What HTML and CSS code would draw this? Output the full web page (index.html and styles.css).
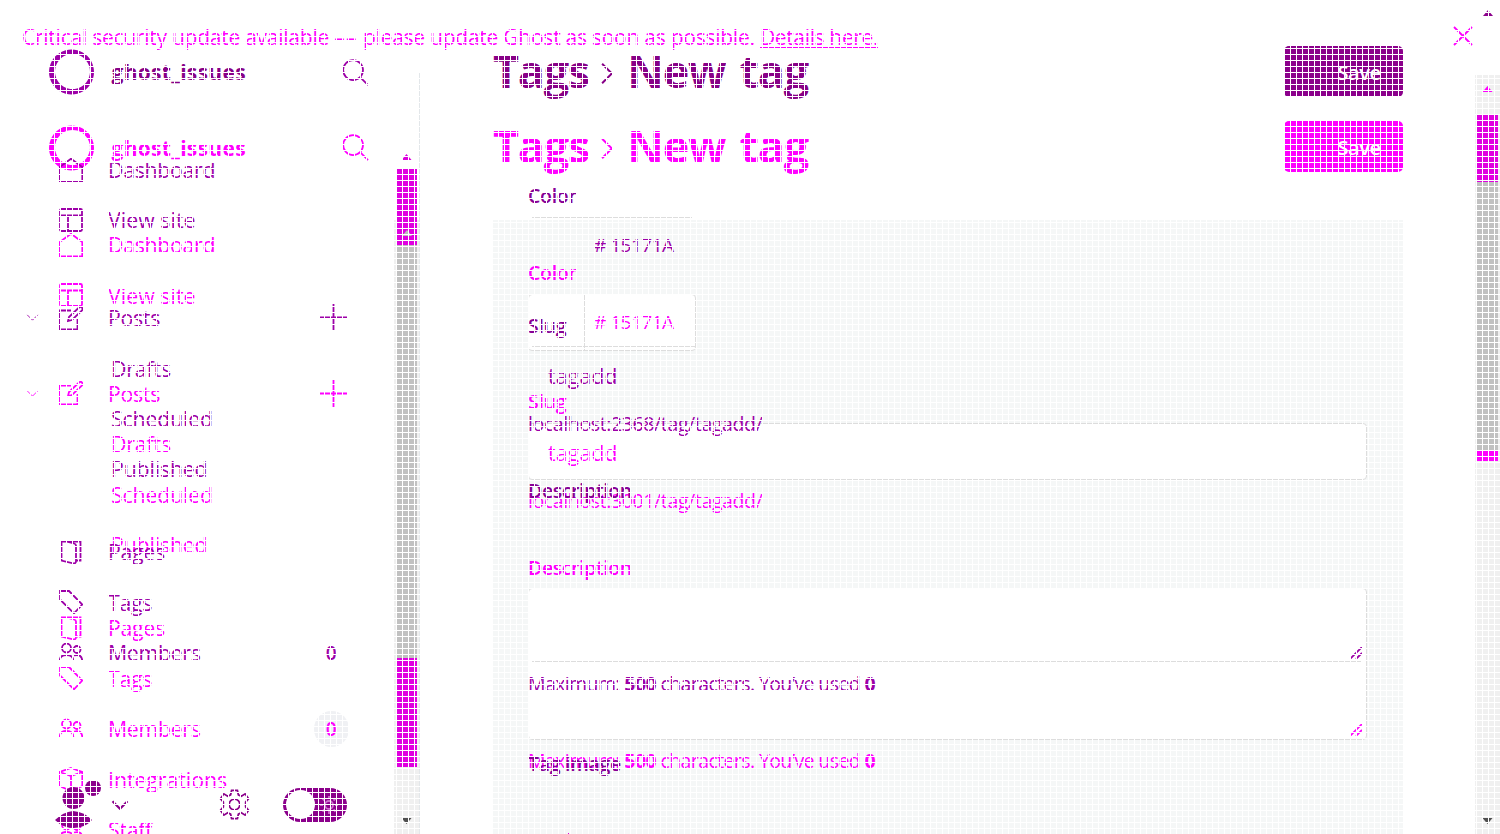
FILE: index.html
```html
<!DOCTYPE html>
<html lang="en">
<head>
<meta charset="utf-8">
<title>New tag</title>
<link rel="stylesheet" href="styles.css">
</head>
<body>
<svg class="defs" width="0" height="0">
  <symbol id="ring" viewBox="0 0 46 46"><path fill="currentColor" fill-rule="evenodd" d="M22.500 0.500a22.500 22.500 0 1 0 .01 0zM23.500 5a17.500 17.500 0 1 1-.01 0z"/></symbol>
  <symbol id="search" viewBox="0 0 28 28"><circle cx="11.500" cy="11.500" r="10.300"/><path d="M19 19l8 8"/></symbol>
  <symbol id="home" viewBox="0 0 24 24"><path d="M.7 9V23.300H23.300V9L12 .7z"/></symbol>
  <symbol id="site" viewBox="0 0 24 24"><rect x="1" y="1" width="22" height="22" rx="1.500"/><path d="M1 7.500H23M9 7.500V23"/></symbol>
  <symbol id="edit" viewBox="0 0 24 24"><path d="M12 4.500H.7V23.300H18.500V13"/><path d="M9 15l1-4L20 1.500q2-1.500 3 0t0 3L13 14z"/></symbol>
  <symbol id="page" viewBox="0 0 24 24"><path d="M17 20.500H21.500V1.500H2.500V20.500L14 23.300q3 .3 3-2V5.500q0-1.500-2-2L7 1.500"/></symbol>
  <symbol id="tag" viewBox="0 0 24 24"><path d="M1 1H10L23.300 14.500L15 23.300L1 9.500z"/></symbol>
  <symbol id="members" viewBox="0 0 24 24"><circle cx="7.500" cy="7" r="4.500"/><circle cx="18" cy="8.500" r="3.500"/><path d="M.7 20q0-6 6.800-6t6.800 6M15 14.500q8-2 8.300 5.500"/></symbol>
  <symbol id="box" viewBox="0 0 24 24"><path d="M12 1L23.300 5V19L12 24L.7 19V5zM.7 5L12 9L23.300 5M12 9V24"/></symbol>
  <symbol id="chev" viewBox="0 0 14 8"><path d="M1 1l6 6 6-6"/></symbol>
  <symbol id="plus" viewBox="0 0 27 27"><path d="M13.500 0V27M0 13.500H27"/></symbol>
  <symbol id="gear" viewBox="0 0 32 32"><circle cx="16" cy="16" r="5.500"/><path d="M13 1.500H19L20 6L23 7.500L27 5L30.500 10L27.500 13.500V18.500L30.500 22L27 27L23 24.500L20 26L19 30.500H13L12 26L9 24.500L5 27L1.500 22L4.500 18.500V13.500L1.500 10L5 5L9 7.500L12 6z"/></symbol>
  <symbol id="grip" viewBox="0 0 12 12"><path d="M0 12L12 0M6 12l6-6"/></symbol>
</svg>

<div class="stage">
  <div class="panel"></div>
  <div class="rule"></div>
  <div class="scroll side">
    <i class="up"></i><i class="thumb t1"></i><i class="thumb t2"></i><i class="thumb t3"></i><i class="down"></i>
  </div>
  <div class="scroll page">
    <i class="up"></i><i class="thumb t1"></i><i class="thumb t2"></i><i class="thumb t3"></i><i class="down"></i>
  </div>

  <div class="layer after">
    <aside>
      <header><svg class="ring"><use href="#ring"/></svg><b class="name">ghost_issues</b><svg class="search"><use href="#search"/></svg></header>
      <nav>
        <a><svg><use href="#home"/></svg><span>Dashboard</span></a>
        <a><svg><use href="#site"/></svg><span class="view">View site</span></a>
        <a class="posts"><svg class="chev"><use href="#chev"/></svg><svg><use href="#edit"/></svg><span>Posts</span><svg class="plus"><use href="#plus"/></svg></a>
        <a class="sub"><span>Drafts</span></a>
        <a class="sub"><span>Scheduled</span></a>
        <a class="sub"><span>Published</span></a>
        <a class="pages"><svg><use href="#page"/></svg><span>Pages</span></a>
        <a><svg><use href="#tag"/></svg><span>Tags</span></a>
        <a><svg><use href="#members"/></svg><span class="members">Members</span><em class="count">0</em></a>
        <a><svg><use href="#box"/></svg><span class="wide">Integrations</span></a>
        <a><svg><use href="#members"/></svg><span>Staff</span></a>
      </nav>
    </aside>
    <main>
      <div class="title"><h1><span>Tags</span><svg><use href="#chev"/></svg><span>New tag</span></h1><button>Save</button></div>
      <form>
        <label>Color</label>
        <div class="color"><i></i><span># 15171A</span></div>
        <label>Slug</label>
        <div class="input">tagadd</div>
        <p class="url">localhost:3001/tag/tagadd/</p>
        <label class="desc">Description</label>
        <div class="area"><svg><use href="#grip"/></svg></div>
        <p class="max">Maximum: <b>500</b> characters. You’ve used <b>0</b></p>
      </form>
    </main>
  </div>

  <div class="layer before">
    <aside>
      <header><svg class="ring"><use href="#ring"/></svg><b class="name">ghost_issues</b><svg class="search"><use href="#search"/></svg></header>
      <nav>
        <a><svg><use href="#home"/></svg><span>Dashboard</span></a>
        <a><svg><use href="#site"/></svg><span class="view">View site</span></a>
        <a class="posts"><svg class="chev"><use href="#chev"/></svg><svg><use href="#edit"/></svg><span>Posts</span><svg class="plus"><use href="#plus"/></svg></a>
        <a class="sub"><span>Drafts</span></a>
        <a class="sub"><span>Scheduled</span></a>
        <a class="sub"><span>Published</span></a>
        <a class="pages"><svg><use href="#page"/></svg><span>Pages</span></a>
        <a><svg><use href="#tag"/></svg><span>Tags</span></a>
        <a><svg><use href="#members"/></svg><span class="members">Members</span><em class="count">0</em></a>
      </nav>
    </aside>
    <main>
      <div class="title"><h1><span>Tags</span><svg><use href="#chev"/></svg><span>New tag</span></h1><button>Save</button></div>
      <form>
        <label>Color</label>
        <div class="color"><i></i><span># 15171A</span></div>
        <label>Slug</label>
        <div class="input">tagadd</div>
        <p class="url">localhost:2368/tag/tagadd/</p>
        <label class="desc">Description</label>
        <div class="area"><svg><use href="#grip"/></svg></div>
        <p class="max">Maximum: <b>500</b> characters. You’ve used <b>0</b></p>
        <label class="image">Tag image</label>
      </form>
    </main>
  </div>

  <div class="userbar">
    <svg class="user" viewBox="0 0 48 50"><circle cx="18.500" cy="18" r="11"/><circle cx="38" cy="8" r="8"/><path d="M0 40Q8 32 18 31Q30 32 37 40Q30 48 18 48Q8 48 0 40z"/></svg>
    <svg class="uchev"><use href="#chev"/></svg>
    <svg class="gear"><use href="#gear"/></svg>
    <div class="toggle"><i></i><svg viewBox="0 0 18 18"><circle cx="9" cy="9" r="4"/><path d="M9 0v3M9 15v3M0 9h3M15 9h3M2.500 2.500l2 2M13.500 13.500l2 2M15.500 2.500l-2 2M4.500 13.500l-2 2"/></svg></div>
  </div>

  <div class="banner"><p>Critical security update available <span class="dash">––</span> please update Ghost as soon as possible. <span class="link">Details here.</span></p><svg viewBox="0 0 18 18"><path d="M0 0L18 18M18 0L0 18"/></svg></div>
  <i class="arrow top"></i>
  <i class="arrow ghost"></i>
  <i class="dot"></i>
  <div class="mesh"></div>
</div>
</body>
</html>
```
FILE: styles.css
```css
* { box-sizing: border-box; }
body { margin: 0; background: #fff; font-family: "Open Sans", "Noto Sans", sans-serif; font-size: 21px; }
h1, p { margin: 0; }
i, em { display: block; font-style: normal; }
svg { fill: none; stroke: currentColor; stroke-width: 1.800px; flex: none; overflow: visible; }
.defs { position: absolute; }
.stage { position: relative; width: 1500px; height: 834px; overflow: hidden; }
.stage > * { position: absolute; }

.panel { left: 493px; top: 220px; width: 910px; height: 614px; background: #f5f7f7; }
.rule { left: 419px; top: 73px; width: 1px; height: 761px; background: #e3e7ea; }

/* scrollbars */
.scroll { display: flex; flex-direction: column; align-items: center; }
.scroll.side { left: 394px; top: 154px; width: 25px; height: 680px; background: linear-gradient(#fff 66px, #f0f0f0 66px); }
.scroll.page { left: 1475px; top: 75px; width: 25px; height: 759px; background: #f0f0f0; }
.up, .down, .arrow { width: 10px; height: 6px; background: #d0d; clip-path: polygon(50% 0, 100% 100%, 0 100%); }
.down { background: #505050; clip-path: polygon(0 0, 100% 0, 50% 100%); margin: auto 0 10px; }
.thumb { width: 20px; background: #e000e0; }
.t2 { background: #c1c1c1; }
.side .t1 { height: 76px; margin-top: 9px; }
.side .t2 { height: 413px; }
.side .t3 { height: 109px; }
.page .thumb { width: 21px; }
.page .up { margin-top: 11px; background: #f0f; }
.page .t1 { height: 67px; margin-top: 23px; }
.page .t2 { height: 269px; }
.page .t3 { height: 10px; background: #f0f; }
.arrow.top { left: 1483px; top: 10px; background: #8b008b; }
.arrow.ghost { left: 402px; top: 230px; background: #bbb; }
.dot { left: 568px; top: 833px; width: 1px; height: 1px; background: #e000e0; }

/* interface layers */
.layer { left: 0; top: 0; width: 1500px; display: grid; grid-template-columns: 493px 910px; color: #f0f; }
.before { top: -75.500px; color: #9d00a8; }
aside header { display: flex; align-items: center; width: 369px; height: 56px; margin-top: 119.500px; padding-left: 48.500px; }
.ring { width: 46px; height: 46px; stroke: none; }
.name { margin-left: 17px; font-size: 21px; letter-spacing: .3px; }
.before .name { color: #870087; }
.search { width: 27px; height: 27px; margin-left: auto; }
nav { margin-top: 44px; }
nav a { display: flex; align-items: center; height: 50.500px; padding-left: 59px; letter-spacing: -.3px; font-size: 21.300px; }
.before nav { margin-top: 44.500px; }
.before nav a { height: 50.300px; }
nav a > svg { width: 24px; height: 24px; margin-right: 25px; }
nav .view { letter-spacing: .05px; }
nav .posts { margin-top: 47.500px; padding-left: 26px; }
nav .posts .chev { width: 13px; height: 7px; margin-right: 20px; stroke-width: 1px; }
nav .posts span { width: 52px; }
nav .posts .plus { width: 27px; height: 27px; margin: 0 0 0 160px; }
nav .sub { padding-left: 111px; letter-spacing: -.15px; }
nav .pages { margin-top: 32.300px; }
.before nav .pages { margin-top: 33px; }
nav a span { white-space: nowrap; }
nav .members { width: 92px; }
nav .wide { letter-spacing: -.05px; }
.count { display: grid; place-items: center; width: 35px; height: 36px; margin-left: 113.500px; border-radius: 50%; background: #f0f1f4; font-size: 19px; font-weight: 600; }
.before .count { background: none; }

.title { display: flex; justify-content: space-between; height: 51px; margin-top: 121px; align-items: center; }
h1 { display: flex; align-items: center; font-size: 45px; line-height: 51px; letter-spacing: -1.300px; word-spacing: 4px; white-space: nowrap; }
h1 { padding-bottom: 2px; }
h1 svg { width: 24px; height: 13px; margin: 6px 8px 0 6.500px; transform: rotate(-90deg); stroke-width: 1.200px; }
.before h1 { color: #870087; }
button { width: 119px; height: 51px; border: 0; border-radius: 5px; background: #f0f; color: #fff; font: 600 20px "Open Sans", sans-serif; letter-spacing: -.4px; padding: 2px 0 0 31px; }
.before button { background: #8b008b; }

form { display: flex; flex-direction: column; margin-top: 86px; padding: 0 36px 0 35px; }
.before form { margin-top: 84.500px; }
label { height: 30px; line-height: 30px; font-size: 19.500px; font-weight: 600; letter-spacing: -.3px; }
.before label { color: #870095; }
.color { display: flex; align-items: center; width: 168px; height: 57px; margin: 6px 0 36px; padding-bottom: 2px; border: 1px solid #ddd; border-radius: 4px; background: #fff; font-size: 19px; letter-spacing: -.5px; white-space: nowrap; }
.color i { align-self: flex-start; width: 56px; height: 55px; border-right: 1px solid #ddd; margin-right: 9px; }
.before .color { margin-top: 5.500px; margin-bottom: 37px; padding-bottom: 0; }
.input { display: flex; align-items: center; height: 57px; margin-top: 6px; padding: 2px 0 0 19px; border: 1px solid #ddd; border-radius: 4px; background: #fff; letter-spacing: .3px; }
.before .input { margin-top: 5.500px; }
.url, .max { height: 30px; line-height: 30px; font-size: 19.500px; letter-spacing: -.38px; white-space: nowrap; }
.url { margin-top: 6px; }
.max { margin-top: 6px; letter-spacing: -.6px; }
.max b { font-weight: 700; }
.desc { margin-top: 37px; letter-spacing: -.4px; }
.area { display: flex; align-items: flex-end; justify-content: flex-end; height: 152px; margin-top: 5px; padding: 0 4px 3px; border: 1px solid #ddd; border-radius: 4px; background: #fff; }
.area svg { width: 12px; height: 12px; }
.before .input, .before .area { background: none; border-color: transparent; }
.before .color { border-color: transparent; background: linear-gradient(#ddd, #ddd) 4px 0 / 160px 1px no-repeat border-box; }
.before .color i { border-color: transparent; }
.before .input { background: linear-gradient(#ddd, #ddd) 4px 0 / 163px 1px no-repeat border-box; }
.before .area { height: 151px; margin-bottom: 1px; background: linear-gradient(#ddd, #ddd) 4px 100% / 829px 1px no-repeat border-box; }
.before .area { padding-bottom: 2px; }
.image { margin-top: 50px; }

/* account controls */
.userbar { left: 55px; top: 779.500px; width: 291.500px; height: 50px; display: flex; align-items: center; color: #8b008b; }
.user { width: 48px; height: 50px; fill: #8b008b; stroke: none; }
.uchev { width: 18px; height: 10px; margin-left: 8px; }
.gear { width: 31px; height: 31px; margin-left: 90px; }
.toggle { display: flex; align-items: center; justify-content: space-between; width: 64px; height: 34px; margin-left: auto; padding: 0 9px 0 3px; border-radius: 17px; background: #8b008b; color: #d070d0; }
.toggle i { width: 29px; height: 29px; border-radius: 50%; background: #fff; }
.toggle svg { width: 18px; height: 18px; }

.banner { left: 22px; top: 22px; width: 1449.500px; height: 30px; display: flex; justify-content: space-between; align-items: center; color: #f0f; }
.banner p { font-size: 21px; line-height: 30px; letter-spacing: -.25px; white-space: nowrap; }
.banner .dash { letter-spacing: 1.300px; }
.banner .link { background: linear-gradient(#f0f, #f0f) 0 24px / 100% 1px no-repeat; letter-spacing: -.35px; }
.banner svg { width: 18px; height: 18px; margin-top: -2px; }

/* one-pixel white lines every six pixels */
.mesh { inset: 0; background:
  repeating-linear-gradient(90deg, #fff 0 1px, transparent 1px 6px),
  repeating-linear-gradient(#fff 0 1px, transparent 1px 6px); }
```
